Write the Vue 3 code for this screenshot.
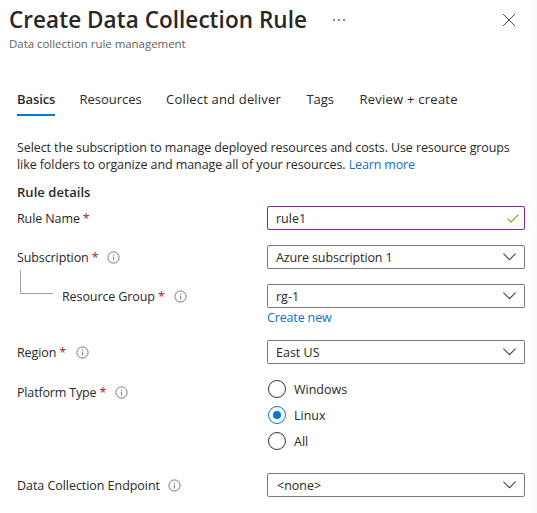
<script setup>
import { ref } from 'vue'

const tabs = [
  { name: 'Basics', key: 'basics' },
  { name: 'Resources', key: 'resources' },
  { name: 'Collect and deliver', key: 'collect' },
  { name: 'Tags', key: 'tags' },
  { name: 'Review + create', key: 'review' },
]
const activeTab = ref('basics')
const ruleName = ref('rule1')
const platforms = ['Windows', 'Linux', 'All']
const platform = ref('Linux')

const rows = [
  { key: 'name', label: 'Rule Name', required: true, kind: 'text' },
  { key: 'subscription', label: 'Subscription', required: true, info: true, kind: 'select', value: 'Azure subscription 1' },
  { key: 'group', label: 'Resource Group', required: true, info: true, kind: 'select', value: 'rg-1', nested: true, link: 'Create new' },
  { key: 'region', label: 'Region', required: true, info: true, kind: 'select', value: 'East US' },
  { key: 'platform', label: 'Platform Type', required: true, info: true, kind: 'radio' },
  { key: 'endpoint', label: 'Data Collection Endpoint', info: true, kind: 'select', value: '<none>' },
]
</script>

<template>
  <div class="blade">
    <header class="header">
      <div class="title-row">
        <h1>Create Data Collection Rule</h1>
        <svg class="more" width="12" height="4" viewBox="0 0 12 4"><path d="M0 1h2v2H0zM5 1h2v2H5zM10 1h2v2h-2z" fill="#8a8886" /></svg>
        <svg class="close" width="14" height="14" viewBox="0 0 14 14"><path d="M1 1l12 12M13 1L1 13" fill="none" stroke="#484644" /></svg>
      </div>
      <p class="subtitle">Data collection rule management</p>
    </header>

    <nav class="tabs">
      <button v-for="t in tabs" :key="t.key" :class="['tab', t.key, { active: t.key === activeTab }]" @click="activeTab = t.key">{{ t.name }}</button>
    </nav>

    <div class="intro">
      <div class="line-one">Select the subscription to manage deployed resources and costs. Use resource groups</div>
      <div class="line-two">like folders to organize and manage all of your resources. <a>Learn more</a></div>
    </div>
    <h2>Rule details</h2>

    <div v-for="r in rows" :key="r.key" :class="['row', 'row-' + r.key]">
      <div class="label-cell">
        <span v-if="r.nested" class="branch"></span>
        <span class="label">{{ r.label }}</span>
        <span v-if="r.required" class="star">*</span>
        <svg v-if="r.info" class="info" width="13" height="13" viewBox="0 0 13 13">
          <circle cx="6.5" cy="6.5" r="5.6" fill="none" stroke="#797775" />
          <path d="M6.5 5.6v4M6.5 3.3v1.2" stroke="#8a8886" stroke-width="1.1" />
        </svg>
      </div>
      <div class="control">
        <div v-if="r.kind === 'text'" class="box valid">
          <input v-model="ruleName" />
          <svg class="check" width="12" height="9" viewBox="0 0 12 9"><path d="M.5 4.6L4 8 11.5.6" fill="none" stroke="#6bb02a" stroke-width="1.25" /></svg>
        </div>
        <div v-else-if="r.kind === 'select'" class="box">
          <span class="value">{{ r.value }}</span>
          <svg class="chevron" width="13" height="8" viewBox="0 0 13 8"><path d="M.4.6l6.1 6.1L12.6.6" fill="none" stroke="#484644" stroke-width="1.1" /></svg>
        </div>
        <div v-else class="radios">
          <label v-for="p in platforms" :key="p" :class="['radio', { checked: p === platform }]" @click="platform = p">
            <span class="ring"></span><span>{{ p }}</span>
          </label>
        </div>
        <a v-if="r.link" class="create">{{ r.link }}</a>
      </div>
    </div>
  </div>
</template>

<style>
body { margin: 0; background: #fff; }
</style>

<style scoped>
* { box-sizing: border-box; }
.blade {
  width: 537px;
  height: 513px;
  overflow: hidden;
  background: linear-gradient(to right, #fff 527px, #fafafa 537px);
  font-family: "Open Sans", "Noto Sans", sans-serif;
  font-size: 12.5px;
  line-height: 17px;
  color: #292827;
}
h1, h2, p { margin: 0; }
a { color: #0b72c9; }
.header { height: 92px; padding: 6px 0 0 9px; }
.title-row { display: flex; align-items: center; height: 28px; }
h1 { width: 299px; font-size: 22.5px; line-height: 28px; font-weight: 600; letter-spacing: 0.05px; white-space: nowrap; }
.more { margin-left: 25px; }
.close { margin-left: 157px; }
.subtitle { margin-top: 2px; font-size: 11.5px; line-height: 16px; letter-spacing: -0.04px; color: #646260; }
.tabs { display: flex; gap: 24.5px; height: 24px; padding-left: 17px; }
.tab { padding: 0; border: 0; background: none; font: inherit; font-size: 13px; color: inherit; line-height: 14px; height: 24px; display: flex; white-space: nowrap; }
.tab.resources { letter-spacing: -0.03px; }
.tab.collect { letter-spacing: 0.17px; }
.tab.tags { margin-left: 1px; }
.tab.review { margin-left: 1px; letter-spacing: 0.24px; }
.tab.active { width: 38px; font-weight: 600; letter-spacing: -0.08px; border-bottom: 2px solid #0078d4; }
.intro { margin-top: 23px; padding-left: 17px; letter-spacing: -0.1px; white-space: nowrap; }
.line-two { letter-spacing: -0.08px; }
.line-two a { letter-spacing: -0.15px; }
h2 { margin: 10px 0 0 17px; font-size: 13px; line-height: 18px; font-weight: 600; letter-spacing: 0.05px; }
.row { display: flex; padding-left: 17px; }
.label-cell { display: flex; align-items: center; width: 250px; height: 24px; letter-spacing: -0.1px; }
.row-endpoint .label-cell { letter-spacing: -0.05px; }
.row-platform .label { letter-spacing: -0.16px; }
.star { margin-left: 3px; color: #a4262c; }
.info { margin-left: 9px; }
.row-region .info { margin-left: 10px; }
.row-endpoint .info { margin-left: 8px; }
.control { width: 258px; }
.row-name { margin-top: 5px; }
.row-subscription, .row-group { margin-top: 15px; }
.branch { width: 33px; height: 24px; margin: -28px 9px 0 3px; border: solid #a19f9d; border-width: 0 0 1px 1px; }
.row-region { margin-top: 14px; }
.row-platform { margin-top: 16px; }
.row-endpoint { margin-top: 19px; }
.box { display: flex; align-items: center; justify-content: space-between; height: 24px; padding: 0 8px; border: 1px solid #7b7977; border-radius: 2px; background: #fff; }
.box.valid { border-color: #8425a0; padding-right: 5px; }
.row-subscription .value { letter-spacing: -0.13px; }
.row-endpoint .value { padding-left: 1px; }
input { width: 200px; padding: 0; border: 0; outline: 0; background: none; color: inherit; font: inherit; }
.create { display: block; margin-top: 1px; letter-spacing: -0.15px; }
.radios { margin-top: -4px; padding-left: 1px; }
.radio { display: flex; align-items: center; gap: 8px; height: 26px; }
.ring { display: flex; align-items: center; justify-content: center; width: 18px; height: 18px; border: 1px solid #323130; border-radius: 50%; }
.checked .ring { border-color: #0078d4; }
.checked .ring::after { content: ""; width: 8px; height: 8px; border-radius: 50%; background: #0078d4; }
</style>
